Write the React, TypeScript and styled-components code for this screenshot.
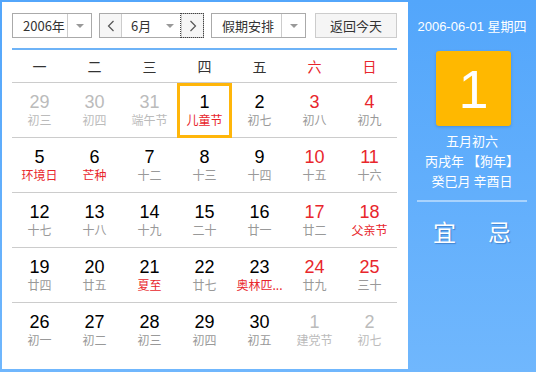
import React from "react";
import styled, { createGlobalStyle } from "styled-components";

const Global = createGlobalStyle`
  html, body { margin: 0; padding: 0; }
  body { font-family: "Liberation Sans", "Noto Sans CJK SC", Arial, sans-serif; }
`;

const Frame = styled.div`
  width: 536px;
  height: 372px;
  display: flex;
  background: linear-gradient(#53a6fb, #70b7fd);
  box-sizing: border-box;
  padding: 2px 0 3px 2px;
`;

const Main = styled.div`
  width: 406px;
  background: #fff;
  box-sizing: border-box;
  padding: 11px 11px 0 10px;
  display: flex;
  flex-direction: column;
`;

const Toolbar = styled.div`
  display: flex;
  height: 25px;
  align-items: stretch;
  margin-bottom: 10px;
`;

const Select = styled.div<{ $w: number; $gap: number }>`
  width: ${(p) => p.$w}px;
  margin-right: ${(p) => p.$gap}px;
  box-sizing: border-box;
  border: 1px solid #aaa;
  display: flex;
  background: #fff;
  font-family: "Noto Sans CJK SC", sans-serif;
  font-size: 13px;
  color: #333;
`;

const SelectLabel = styled.div`
  flex: 1;
  display: flex;
  align-items: center;
  padding-left: 10px;
  line-height: 1;
`;

const Caret = styled.div<{ $line?: boolean }>`
  width: 23px;
  border-left: ${(p) => (p.$line ? "1px solid #ccc" : "none")};
  display: flex;
  align-items: center;
  justify-content: center;
  &::after {
    content: "";
    border-left: 4px solid transparent;
    border-right: 4px solid transparent;
    border-top: 4px solid #999;
  }
`;

const MonthGroup = styled.div`
  width: 105px;
  margin-right: 7px;
  box-sizing: border-box;
  border: 1px solid #aaa;
  display: flex;
  font-family: "Noto Sans CJK SC", sans-serif;
  font-size: 13px;
  color: #333;
`;

const Arrow = styled.div<{ $focus?: boolean }>`
  width: 22px;
  background: #f6f6f6;
  display: flex;
  align-items: center;
  justify-content: center;
  color: #555;
  box-sizing: border-box;
  outline: ${(p) => (p.$focus ? "1px dotted #444" : "none")};
  outline-offset: 0;
  border-left: ${(p) => (p.$focus ? "1px solid #ccc" : "none")};
  border-right: ${(p) => (p.$focus ? "none" : "1px solid #ccc")};
`;

const MonthLabel = styled.div`
  flex: 1;
  display: flex;
  align-items: center;
  padding-left: 9px;
`;

const TodayBtn = styled.div`
  width: 82px;
  box-sizing: border-box;
  border: 1px solid #ccc;
  background: #f5f5f5;
  display: flex;
  align-items: center;
  justify-content: center;
  font-family: "Noto Sans CJK SC", sans-serif;
  font-size: 13px;
  color: #333;
`;

const Table = styled.div`
  border-top: 2px solid #6eb3f7;
  display: flex;
  flex-direction: column;
`;

const Row = styled.div<{ $head?: boolean; $last?: boolean }>`
  display: grid;
  grid-template-columns: repeat(7, 55px);
  height: ${(p) => (p.$head ? 33 : 55)}px;
  box-sizing: border-box;
  border-bottom: ${(p) => (p.$last ? "none" : "1px solid #ccc")};
`;

const Head = styled.div<{ $red?: boolean }>`
  display: flex;
  align-items: center;
  justify-content: center;
  font-family: "Noto Sans CJK SC", sans-serif;
  font-size: 14px;
  color: ${(p) => (p.$red ? "#e8262c" : "#333")};
`;

const Cell = styled.div<{ $today?: boolean }>`
  display: flex;
  flex-direction: column;
  align-items: center;
  padding-top: 9px;
  box-sizing: border-box;
  height: ${(p) => (p.$today ? 55 : 54)}px;
  box-shadow: ${(p) => (p.$today ? "inset 0 0 0 3px #ffb60a" : "none")};
  position: relative;
  z-index: ${(p) => (p.$today ? 1 : 0)};
`;

const Num = styled.div<{ $c: string }>`
  font-family: "Liberation Sans", Arial, sans-serif;
  font-size: 18px;
  line-height: 20px;
  color: ${(p) => p.$c};
`;

const Sub = styled.div<{ $c: string }>`
  font-family: "Noto Sans CJK SC", sans-serif;
  font-size: 12px;
  line-height: 16px;
  color: ${(p) => p.$c};
  white-space: nowrap;
`;

const Side = styled.div`
  flex: 1;
  display: flex;
  flex-direction: column;
  align-items: center;
  color: #fff;
  font-family: "Noto Sans CJK SC", sans-serif;
  padding-top: 16px;
`;

const SideDate = styled.div`
  font-size: 13px;
  line-height: 18px;
  margin-bottom: 15px;
  font-family: "Liberation Sans", "Noto Sans CJK SC", sans-serif;
`;

const BigBox = styled.div`
  width: 75px;
  height: 75px;
  border-radius: 3px;
  background: #ffb800;
  display: flex;
  align-items: center;
  justify-content: center;
  font-family: "Liberation Sans", Arial, sans-serif;
  font-size: 54px;
  color: #fff;
  margin-left: 3px;
  box-shadow: 0 1px 3px rgba(0, 60, 140, 0.25);
`;

const Lunar = styled.div`
  margin-top: 5px;
  font-size: 13px;
  line-height: 20px;
  text-align: center;
`;

const Divider = styled.div`
  width: 110px;
  height: 2px;
  background: rgba(255, 255, 255, 0.45);
  margin-top: 9px;
`;

const YiJi = styled.div`
  display: flex;
  gap: 32px;
  margin-top: 15px;
  font-size: 23px;
  line-height: 28px;
  text-shadow: 1px 1px 1px rgba(0, 50, 120, 0.35);
`;

const Chevron = ({ dir }: { dir: "l" | "r" }) => (
  <svg width="8" height="12" viewBox="0 0 8 12" fill="none">
    <path
      d={dir === "l" ? "M6.5 1 L1.5 6 L6.5 11" : "M1.5 1 L6.5 6 L1.5 11"}
      stroke="#555"
      strokeWidth="1.2"
    />
  </svg>
);

type D = { n: number; s: string; other?: boolean; red?: boolean; fest?: boolean; today?: boolean };

const rows: D[][] = [
  [
    { n: 29, s: "初三", other: true },
    { n: 30, s: "初四", other: true },
    { n: 31, s: "端午节", other: true },
    { n: 1, s: "儿童节", fest: true, today: true },
    { n: 2, s: "初七" },
    { n: 3, s: "初八", red: true },
    { n: 4, s: "初九", red: true },
  ],
  [
    { n: 5, s: "环境日", fest: true },
    { n: 6, s: "芒种", fest: true },
    { n: 7, s: "十二" },
    { n: 8, s: "十三" },
    { n: 9, s: "十四" },
    { n: 10, s: "十五", red: true },
    { n: 11, s: "十六", red: true },
  ],
  [
    { n: 12, s: "十七" },
    { n: 13, s: "十八" },
    { n: 14, s: "十九" },
    { n: 15, s: "二十" },
    { n: 16, s: "廿一" },
    { n: 17, s: "廿二", red: true },
    { n: 18, s: "父亲节", red: true, fest: true },
  ],
  [
    { n: 19, s: "廿四" },
    { n: 20, s: "廿五" },
    { n: 21, s: "夏至", fest: true },
    { n: 22, s: "廿七" },
    { n: 23, s: "奥林匹...", fest: true },
    { n: 24, s: "廿九", red: true },
    { n: 25, s: "三十", red: true },
  ],
  [
    { n: 26, s: "初一" },
    { n: 27, s: "初二" },
    { n: 28, s: "初三" },
    { n: 29, s: "初四" },
    { n: 30, s: "初五" },
    { n: 1, s: "建党节", other: true },
    { n: 2, s: "初七", other: true },
  ],
];

const heads = ["一", "二", "三", "四", "五", "六", "日"];

export default function App() {
  return (
    <>
      <Global />
      <Frame>
        <Main>
          <Toolbar>
            <Select $w={80} $gap={7}>
              <SelectLabel>2006年</SelectLabel>
              <Caret $line />
            </Select>
            <MonthGroup>
              <Arrow>
                <Chevron dir="l" />
              </Arrow>
              <MonthLabel>6月</MonthLabel>
              <Caret />
              <Arrow $focus>
                <Chevron dir="r" />
              </Arrow>
            </MonthGroup>
            <Select $w={95} $gap={9}>
              <SelectLabel>假期安排</SelectLabel>
              <Caret $line />
            </Select>
            <TodayBtn>返回今天</TodayBtn>
          </Toolbar>
          <Table>
            <Row $head>
              {heads.map((h, i) => (
                <Head key={h} $red={i >= 5}>
                  {h}
                </Head>
              ))}
            </Row>
            {rows.map((r, ri) => (
              <Row key={ri} $last={ri === rows.length - 1}>
                {r.map((d, di) => {
                  const numC = d.other ? "#bbb" : d.red ? "#e8262c" : "#000";
                  const subC = d.other ? "#bbb" : d.fest ? "#e8262c" : "#999";
                  return (
                    <Cell key={di} $today={d.today}>
                      <Num $c={numC}>{d.n}</Num>
                      <Sub $c={subC}>{d.s}</Sub>
                    </Cell>
                  );
                })}
              </Row>
            ))}
          </Table>
        </Main>
        <Side>
          <SideDate>2006-06-01 星期四</SideDate>
          <BigBox>1</BigBox>
          <Lunar>
            五月初六
            <br />
            丙戌年 【狗年】
            <br />
            癸巳月 辛酉日
          </Lunar>
          <Divider />
          <YiJi>
            <span>宜</span>
            <span>忌</span>
          </YiJi>
        </Side>
      </Frame>
    </>
  );
}
